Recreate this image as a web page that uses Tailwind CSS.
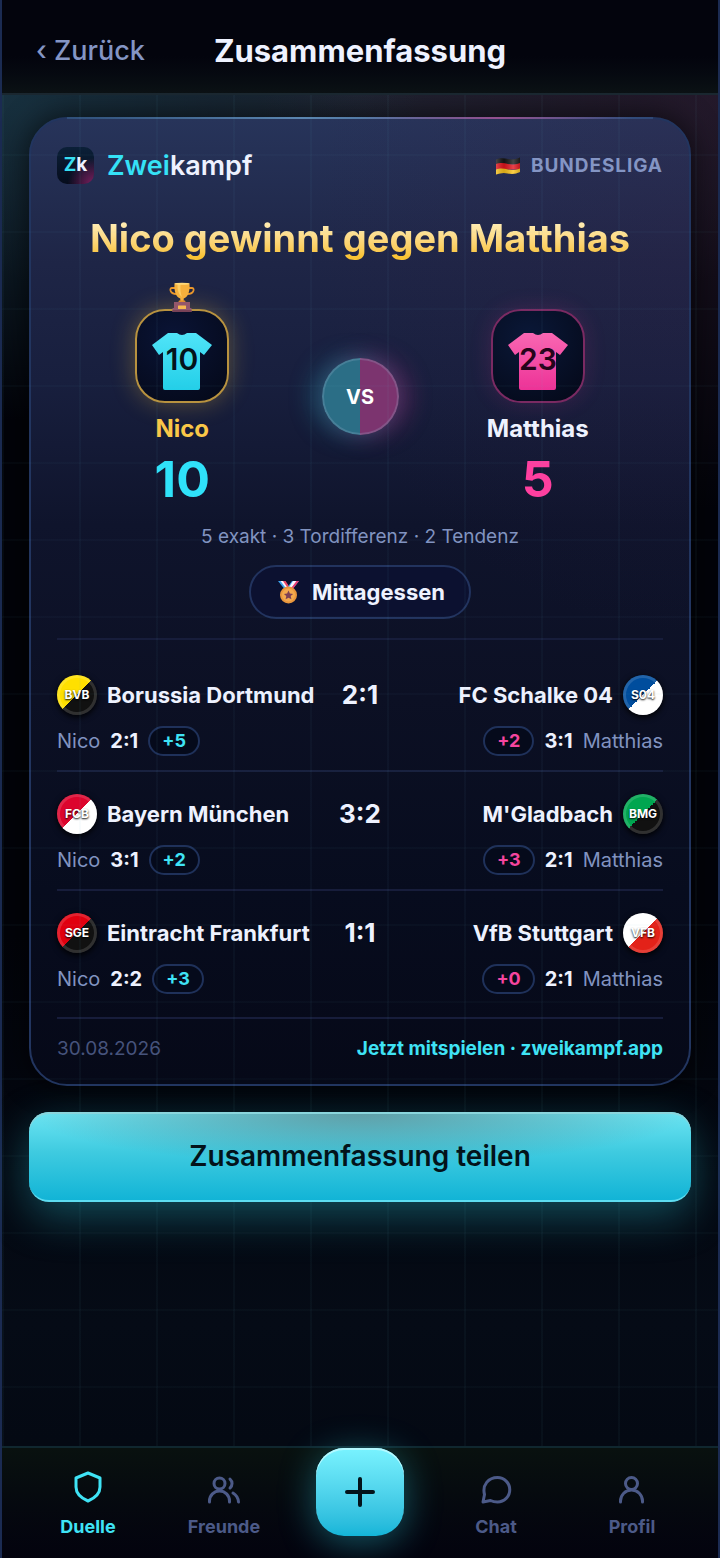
<!DOCTYPE html>
<html lang="de">

<head>
  <meta charset="UTF-8">
  <meta name="viewport" content="width=device-width, initial-scale=1.0">
  <title>Zweikampf – Zusammenfassung</title>
  <script src="https://cdn.jsdelivr.net/npm/@tailwindcss/browser@4"></script>
</head>

<body class="bg-[#03040b] font-['Inter',sans-serif] text-[#eef2ff]">
  <div class="relative min-h-screen flex flex-col border-x-2 border-[#1b2b52] bg-[radial-gradient(ellipse_420px_330px_at_0%_90px,#1b3a4acc,transparent),radial-gradient(ellipse_460px_420px_at_100%_90px,#3a243e88,transparent),radial-gradient(ellipse_500px_260px_at_50%_90px,#2b3344aa,transparent),linear-gradient(#020309_60%,#050b16_85%,#030710)]">

    <!-- pitch grid -->
    <div class="pointer-events-none absolute inset-0 z-10 bg-[linear-gradient(90deg,#5fb0c80b_2px,transparent_2px),linear-gradient(#5fb0c808_2px,transparent_2px)] bg-size-[77px_77px]"></div>

    <header class="relative z-20 grid grid-cols-[1fr_auto_1fr] items-center h-[95px] pt-2 px-[34px] border-b-2 border-[#1a2730] bg-linear-to-b from-[#03040d] from-60% to-[#0b1114]">
      <a href="#" class="text-[27px] leading-8 font-medium text-[#8495c4]">‹ Zurück</a>
      <h1 class="text-[31px] leading-10 font-bold">Zusammenfassung</h1>
    </header>

    <main class="flex-1 px-[27px] pt-[22px] pb-8">
      <article class="relative rounded-[38px] border-2 border-[#22355f] px-[26px] pt-7 pb-[21px] bg-[radial-gradient(ellipse_380px_420px_at_100%_10%,#3a204533,transparent),linear-gradient(#27345a,#1e2546_15%,#181f3e_27%,#0f142c_42%,#0c1024_60%,#070c1e_80%,#060918)] shadow-[0_0_30px_#000000aa]">
        <div class="absolute -top-0.5 left-9 right-9 h-0.5 bg-linear-to-r from-[#2f4f7a] via-[#5b86b0] via-40% to-[#2f4877]"></div>
        <div class="absolute -top-0.5 left-1/2 right-14 h-0.5 bg-linear-to-r from-transparent via-[#94508f] to-transparent"></div>

        <div class="flex items-center justify-between">
          <div class="flex items-center gap-[13px]">
            <span class="flex items-center justify-center size-[37px] rounded-[10px] bg-[radial-gradient(circle_at_100%_100%,#7d1f60,transparent_50%),linear-gradient(#0b2038,#060c1c)] text-[19px] font-bold"><span class="text-[#37dff2]">Z</span>k</span>
            <span class="text-[27px] leading-9 font-semibold"><span class="text-[#35e2f7]">Zwei</span>kampf</span>
          </div>
          <div class="flex items-center gap-2.5 text-[#8495c4]">
            <svg class="w-[26px] h-[18px]" viewBox="0 0 26 18">
              <defs>
                <clipPath id="flag"><path d="M1 2.500C5 .5 9 1 13 2s8 .5 12-1.500V15c-4 2-8 2.500-12 1.500S5 16 1 17.500z" /></clipPath>
                <linearGradient id="wave"><stop stop-color="#fff" stop-opacity=".25" /><stop offset=".35" stop-color="#000" stop-opacity=".15" /><stop offset=".7" stop-color="#fff" stop-opacity=".2" /><stop offset="1" stop-color="#000" stop-opacity=".2" /></linearGradient>
              </defs>
              <g clip-path="url(#flag)">
                <path fill="#171717" d="M0 0h26v7H0z" />
                <path fill="#e4141d" d="M0 7.500C5 5 9 6 13 7s8 .5 13-1.500v7H0z" />
                <path fill="#fcc51b" d="M0 13c5-2.500 9-1.500 13-.5s8 .5 13-1.500v8H0z" />
                <path fill="url(#wave)" d="M0 0h26v18H0z" />
              </g>
            </svg>
            <span class="text-[19px] leading-7 font-bold tracking-wider">BUNDESLIGA</span>
          </div>
        </div>

        <h2 class="mt-[29px] text-center text-[38px] leading-[50px] font-bold whitespace-nowrap"><span class="bg-linear-to-b from-[#ffebb0] from-20% to-[#f9c335] to-90% bg-clip-text text-transparent">Nico gewinnt gegen Matthias</span></h2>

        <div class="grid grid-cols-[1fr_77px_1fr] gap-[14px] items-center mt-[46px]">
          <div class="flex flex-col items-center">
            <div class="relative flex items-center justify-center size-[94px] pt-2.5 rounded-[30px] border-2 border-[#b8923f] bg-[radial-gradient(circle_at_40%_30%,#0a1436,#040817)] shadow-[0_0_24px_#f9c33550]">
              <svg class="absolute -top-[30px] left-1/2 -translate-x-1/2 w-7 h-[31px]" viewBox="0 0 28 31">
                <path fill="none" stroke="#e9962b" stroke-width="1.800" d="M7 7H4Q2 7 2.500 9.500C3.200 12.500 5.500 13 9 13M21 7h3q2 0 1.500 2.500C24.800 12.500 22.500 13 19 13" />
                <path fill="#f5b03c" d="M6.500 2.500h15c.6 8-1.500 13.500-5.800 15v3.500h-3.400v-3.500C8 16 5.900 10.500 6.500 2.500z" />
                <path fill="#fccc63" d="M9.500 3h3c-.4 6 .2 10 1.500 13-3-2-4.800-7-4.500-13z" />
                <ellipse cx="14" cy="2.800" rx="7.500" ry="1" fill="#ffd978" />
                <path fill="#e08c2c" d="M11 19.500h6l1 2.500h-8z" />
                <path fill="#94576b" d="M6 21h16v6h1.500v4H4.500v-4H6z" />
                <path fill="#784257" d="M4.500 29h19v2h-19z" />
                <rect x="10" y="24.500" width="8" height="3.500" rx=".5" fill="#f9b950" />
              </svg>
              <svg class="w-[62px] h-[60px]" viewBox="0 0 62 60">
                <defs><linearGradient id="cyan" x2="0" y2="1"><stop stop-color="#50e4f8" /><stop offset="1" stop-color="#23cfe8" /></linearGradient></defs>
                <path fill="url(#cyan)" d="M17 2h9q5 4 10 0h9l16 12-8 10-4-3v36q0 2-2 2H14q-2 0-2-2V21l-4 3L1 14z" />
                <text x="31" y="39" text-anchor="middle" font-size="30" font-weight="600" fill="#04131b">10</text>
              </svg>
            </div>
            <p class="mt-3 text-[24px] leading-7 font-bold text-[#f9c748]">Nico</p>
            <p class="mt-[7px] text-[50px] leading-[58px] font-bold text-[#2fe2fa]">10</p>
          </div>

          <div class="flex items-center justify-center size-[77px] -mt-6 rounded-full border-2 border-[#9db4d040] bg-[linear-gradient(90deg,#2b6e86_50%,#7c346f_50%)] bg-origin-border shadow-[-9px_0_24px_#26a8b860,9px_0_24px_#c1338b60] text-[20px] font-bold text-white">VS</div>

          <div class="flex flex-col items-center">
            <div class="flex items-center justify-center size-[94px] pt-2.5 rounded-[30px] border-2 border-[#7a2a62] bg-[radial-gradient(circle_at_40%_30%,#0a1838,#040817)] shadow-[0_0_22px_#ee3a9a28]">
              <svg class="w-[62px] h-[60px]" viewBox="0 0 62 60">
                <defs><linearGradient id="pink" x2="0" y2="1"><stop stop-color="#f967b2" /><stop offset="1" stop-color="#ed3297" /></linearGradient></defs>
                <path fill="url(#pink)" d="M17 2h9q5 4 10 0h9l16 12-8 10-4-3v36q0 2-2 2H14q-2 0-2-2V21l-4 3L1 14z" />
                <text x="31" y="39" text-anchor="middle" font-size="30" font-weight="600" fill="#26041b">23</text>
              </svg>
            </div>
            <p class="mt-3 text-[24px] leading-7 font-bold">Matthias</p>
            <p class="mt-[7px] text-[50px] leading-[58px] font-bold text-[#ff3f9f]">5</p>
          </div>
        </div>

        <p class="mt-[15px] text-center text-[19px] leading-7 text-[#8193c0]">5 exakt · 3 Tordifferenz · 2 Tendenz</p>

        <div class="flex items-center justify-center gap-2.5 w-fit mx-auto mt-[14px] h-[54px] px-6 rounded-full border-2 border-[#22335e] bg-[#0c1130]">
          <svg class="w-[27px] h-[26px]" viewBox="0 0 27 26">
            <path fill="#3ea4ef" d="M3 2h7l5 7-4 3z" />
            <path fill="#f7f5fc" d="M5.500 2h3l5 7-2 1z" />
            <path fill="#ee4566" d="M8 2h2.500l4 6-1.500 1.500z" />
            <path fill="#3ea4ef" d="M24 2h-7l-5 7 4 3z" />
            <path fill="#f7f5fc" d="M22 2h-4l-4.500 7 2 1z" />
            <path fill="#ee3d70" d="M24 2h-2.500l-6 8 1.500 1z" />
            <circle cx="13.500" cy="16" r="8.500" fill="#e9963c" />
            <circle cx="13.500" cy="16" r="6.500" fill="#f3a94e" />
            <path fill="#7d4155" d="m13.500 11.500 1.400 3 3.200.4-2.400 2.200.7 3.200-2.900-1.600-2.900 1.600.7-3.200-2.400-2.200 3.200-.4z" />
          </svg>
          <span class="text-[22px] leading-7 font-bold">Mittagessen</span>
        </div>

        <ul class="mt-[19px] pt-[13px] border-t-2 border-[#171d3b] divide-y-2 divide-[#171d3b]">
          <li class="pt-[22px] pb-[14px]">
            <div class="grid grid-cols-[1fr_auto_1fr] items-center">
              <div class="flex items-center gap-2.5 whitespace-nowrap">
                <span class="flex items-center justify-center size-10 shrink-0 rounded-full bg-[linear-gradient(135deg,#ffe000_50%,#111_50%)] shadow-[inset_0_0_0_3px_#ffffff22,0_2px_6px_#000] text-[12px] font-bold text-white text-shadow-[0_1px_2px_#000]">BVB</span>
                <span class="text-[22px] leading-7 font-bold">Borussia Dortmund</span>
              </div>
              <span class="text-[26px] leading-8 font-bold">2:1</span>
              <div class="flex items-center justify-end gap-2.5 whitespace-nowrap">
                <span class="text-[22px] leading-7 font-bold">FC Schalke 04</span>
                <span class="flex items-center justify-center size-10 shrink-0 rounded-full bg-[linear-gradient(135deg,#004d9d_50%,#fff_50%)] shadow-[inset_0_0_0_3px_#ffffff22,0_2px_6px_#000] text-[12px] font-bold text-white text-shadow-[0_1px_2px_#000]">S04</span>
              </div>
            </div>
            <div class="flex items-center justify-between mt-[11px] text-xl leading-7 text-[#8193c0]">
              <div class="flex items-center gap-2.5">Nico <span class="text-xl leading-7 font-bold text-[#eef2ff]">2:1</span>
                <span class="h-[30px] px-3 leading-[26px] rounded-full border-2 border-[#1f315a] bg-[#050a1b] text-[18px] font-bold text-[#3fe3f5]">+5</span>
              </div>
              <div class="flex items-center gap-2.5">
                <span class="h-[30px] px-3 leading-[26px] rounded-full border-2 border-[#1f315a] bg-[#050a1b] text-[18px] font-bold text-[#f5459f]">+2</span>
                <span class="text-xl leading-7 font-bold text-[#eef2ff]">3:1</span> Matthias
              </div>
            </div>
          </li>
          <li class="pt-[22px] pb-[14px]">
            <div class="grid grid-cols-[1fr_auto_1fr] items-center">
              <div class="flex items-center gap-2.5 whitespace-nowrap">
                <span class="flex items-center justify-center size-10 shrink-0 rounded-full bg-[linear-gradient(135deg,#dc052d_50%,#fff_50%)] shadow-[inset_0_0_0_3px_#ffffff22,0_2px_6px_#000] text-[12px] font-bold text-white text-shadow-[0_1px_2px_#000]">FCB</span>
                <span class="text-[22px] leading-7 font-bold">Bayern München</span>
              </div>
              <span class="text-[26px] leading-8 font-bold">3:2</span>
              <div class="flex items-center justify-end gap-2.5 whitespace-nowrap">
                <span class="text-[22px] leading-7 font-bold">M'Gladbach</span>
                <span class="flex items-center justify-center size-10 shrink-0 rounded-full bg-[linear-gradient(135deg,#00a650_50%,#111_50%)] shadow-[inset_0_0_0_3px_#ffffff22,0_2px_6px_#000] text-[12px] font-bold text-white text-shadow-[0_1px_2px_#000]">BMG</span>
              </div>
            </div>
            <div class="flex items-center justify-between mt-[11px] text-xl leading-7 text-[#8193c0]">
              <div class="flex items-center gap-2.5">Nico <span class="text-xl leading-7 font-bold text-[#eef2ff]">3:1</span>
                <span class="h-[30px] px-3 leading-[26px] rounded-full border-2 border-[#1f315a] bg-[#050a1b] text-[18px] font-bold text-[#3fe3f5]">+2</span>
              </div>
              <div class="flex items-center gap-2.5">
                <span class="h-[30px] px-3 leading-[26px] rounded-full border-2 border-[#1f315a] bg-[#050a1b] text-[18px] font-bold text-[#f5459f]">+3</span>
                <span class="text-xl leading-7 font-bold text-[#eef2ff]">2:1</span> Matthias
              </div>
            </div>
          </li>
          <li class="pt-[22px] pb-[23px]">
            <div class="grid grid-cols-[1fr_auto_1fr] items-center">
              <div class="flex items-center gap-2.5 whitespace-nowrap">
                <span class="flex items-center justify-center size-10 shrink-0 rounded-full bg-[linear-gradient(135deg,#e1000f_50%,#111_50%)] shadow-[inset_0_0_0_3px_#ffffff22,0_2px_6px_#000] text-[12px] font-bold text-white text-shadow-[0_1px_2px_#000]">SGE</span>
                <span class="text-[22px] leading-7 font-bold">Eintracht Frankfurt</span>
              </div>
              <span class="text-[26px] leading-8 font-bold">1:1</span>
              <div class="flex items-center justify-end gap-2.5 whitespace-nowrap">
                <span class="text-[22px] leading-7 font-bold">VfB Stuttgart</span>
                <span class="flex items-center justify-center size-10 shrink-0 rounded-full bg-[linear-gradient(135deg,#fff_50%,#e32219_50%)] shadow-[inset_0_0_0_3px_#ffffff22,0_2px_6px_#000] text-[12px] font-bold text-white text-shadow-[0_1px_2px_#000]">VFB</span>
              </div>
            </div>
            <div class="flex items-center justify-between mt-[11px] text-xl leading-7 text-[#8193c0]">
              <div class="flex items-center gap-2.5">Nico <span class="text-xl leading-7 font-bold text-[#eef2ff]">2:2</span>
                <span class="h-[30px] px-3 leading-[26px] rounded-full border-2 border-[#1f315a] bg-[#050a1b] text-[18px] font-bold text-[#3fe3f5]">+3</span>
              </div>
              <div class="flex items-center gap-2.5">
                <span class="h-[30px] px-3 leading-[26px] rounded-full border-2 border-[#1f315a] bg-[#050a1b] text-[18px] font-bold text-[#f5459f]">+0</span>
                <span class="text-xl leading-7 font-bold text-[#eef2ff]">2:1</span> Matthias
              </div>
            </div>
          </li>
        </ul>

        <footer class="flex items-center justify-between pt-4 border-t-2 border-[#171d3b]">
          <time datetime="2026-08-30" class="text-[19px] leading-7 text-[#46537c]">30.08.2026</time>
          <a href="#" class="text-[19px] leading-7 font-bold text-[#3fe3f5]">Jetzt mitspielen · zweikampf.app</a>
        </footer>
      </article>

      <button class="relative z-20 block w-full h-[90px] mt-[26px] rounded-[20px] border-b-2 border-[#5ddcf0] bg-[radial-gradient(ellipse_50%_60%_at_50%_0%,#5a7a80aa,transparent),linear-gradient(#6de5f3,#3fcbe0_45%,#12b4d6)] shadow-[inset_0_2px_0_#8ad5dc,0_14px_44px_#26b4c666] text-[28px] font-semibold text-[#03131a] cursor-pointer">
        Zusammenfassung teilen
      </button>
    </main>

    <nav class="relative z-20 grid grid-cols-5 items-start h-28 px-[18px] border-t-2 border-[#10272f] bg-linear-to-b from-[#09110f] to-[#03030e] text-[18px] leading-6 font-bold text-[#4c5a88]">
      <a href="#" class="flex flex-col items-center gap-2.5 pt-[23px] text-[#3fe3f5]">
        <svg class="size-[34px]" viewBox="0 0 34 34" fill="none" stroke="currentColor" stroke-width="3" stroke-linejoin="round">
          <path d="m17 2 12 5v9c0 7-5 11-12 14C10 27 5 23 5 16V7z" />
        </svg>
        Duelle
      </a>
      <a href="#" class="flex flex-col items-center gap-2.5 pt-[23px]">
        <svg class="size-[34px]" viewBox="0 0 34 34" fill="none" stroke="currentColor" stroke-width="3" stroke-linecap="round">
          <circle cx="12.500" cy="12.500" r="5.500" />
          <path d="M2.500 31v-1a10 10 0 0 1 20 0v1M23 8a6 6 0 0 1 0 9M26 22q5 3 5.500 9" />
        </svg>
        Freunde
      </a>
      <button aria-label="Neues Duell" class="flex items-center justify-center size-[88px] justify-self-center rounded-[28px] bg-linear-to-b from-[#79f3ff] to-[#13b5d8] shadow-[inset_0_2px_0_#b5f8ff,0_6px_36px_#26b4c677] text-[#03131a] cursor-pointer">
        <svg class="size-8" viewBox="0 0 32 32" fill="none" stroke="currentColor" stroke-width="4" stroke-linecap="round">
          <path d="M16 3v26M3 16h26" />
        </svg>
      </button>
      <a href="#" class="flex flex-col items-center gap-2.5 pt-[23px]">
        <svg class="size-[34px]" viewBox="0 0 34 34" fill="none" stroke="currentColor" stroke-width="3" stroke-linejoin="round">
          <path d="M4 31 5.500 23.500C3 14 9.500 6.500 18.500 6.500a12 12 0 0 1 0 24.500c-3 0-5-.5-7-1.500z" />
        </svg>
        Chat
      </a>
      <a href="#" class="flex flex-col items-center gap-2.5 pt-[23px]">
        <svg class="size-[34px]" viewBox="0 0 34 34" fill="none" stroke="currentColor" stroke-width="3" stroke-linecap="round">
          <circle cx="16.500" cy="12.500" r="6" />
          <path d="M5.500 31v-1a11 11 0 0 1 22 0v1" />
        </svg>
        Profil
      </a>
    </nav>
  </div>
</body>

</html>
